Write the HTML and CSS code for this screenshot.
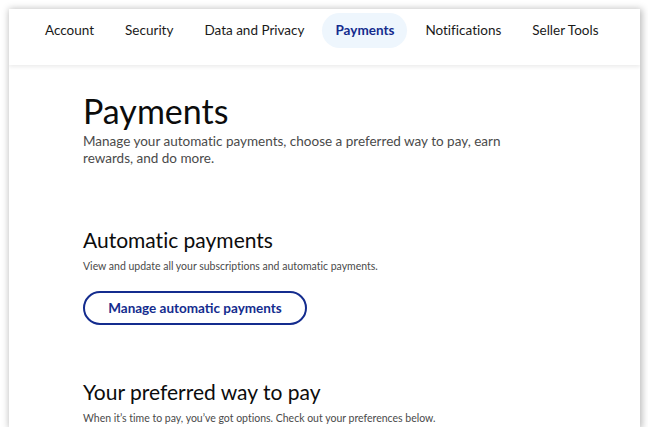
FILE: index.html
```html
<!DOCTYPE html>
<html lang="en">
<head>
<meta charset="utf-8">
<title>Payments</title>
<link rel="stylesheet" href="styles.css">
</head>
<body>
<div class="frame">
  <nav class="tabs">
    <a class="tab">Account</a>
    <a class="tab">Security</a>
    <a class="tab">Data and Privacy</a>
    <a class="tab active">Payments</a>
    <a class="tab">Notifications</a>
    <a class="tab">Seller Tools</a>
  </nav>
  <main class="content">
    <h1 class="title">Payments</h1>
    <p class="lead">Manage your automatic payments, choose a preferred way to pay, earn rewards, and do more.</p>

    <section class="section">
      <h2 class="section-title">Automatic payments</h2>
      <p class="section-text">View and update all your subscriptions and automatic payments.</p>
      <button class="btn-outline">Manage automatic payments</button>
    </section>

    <section class="section second">
      <h2 class="section-title">Your preferred way to pay</h2>
      <p class="section-text">When it’s time to pay, you’ve got options. Check out your preferences below.</p>
    </section>
  </main>
</div>
</body>
</html>
```

FILE: styles.css
```css
* { box-sizing: border-box; }
html, body { margin: 0; padding: 0; background: #ffffff; }
body {
  font-family: "Lato", "Open Sans", sans-serif;
  font-variant-ligatures: none;
  color: #001435;
}
.frame {
  margin: 9px 8px 0 9px;
  width: 631px;
  height: 418px;
  overflow: hidden;
  background: #ffffff;
  box-shadow: 1px 1px 7px 1px rgba(0,0,0,0.28);
}
.tabs {
  display: flex;
  align-items: center;
  gap: 5px;
  padding: 4px 0 17px 23px;
  height: 56px;
  box-shadow: 0 2px 4px rgba(0,0,0,0.08);
  position: relative;
}
.tab {
  display: block;
  padding: 0 13px;
  height: 35px;
  line-height: 35px;
  font-size: 13.5px;
  color: #1a1a1a;
  border-radius: 18px;
  white-space: nowrap;
}
.tab.active {
  background: #eef6fd;
  color: #142c8e;
  font-weight: 700;
}
.content {
  padding: 26px 0 0 74px;
}
.title {
  margin: 0;
  font-size: 34px;
  line-height: 40px;
  font-weight: 400;
  color: #0c0c0c;
}
.lead {
  margin: 2px 0 0;
  max-width: 440px;
  font-size: 13.5px;
  line-height: 17px;
  color: #4a4a4a;
}
.section { margin-top: 60px; }
.section.second { margin-top: 54px; }
.section-title {
  margin: 0;
  font-size: 21px;
  line-height: 26px;
  font-weight: 400;
  color: #0c0c0c;
}
.section-text {
  margin: 6px 0 0;
  font-size: 10.5px;
  line-height: 15px;
  color: #4a4a4a;
}
.btn-outline {
  margin-top: 17px;
  width: 224px;
  height: 34px;
  border: 2px solid #142c8e;
  border-radius: 17px;
  background: #ffffff;
  color: #142c8e;
  font-family: inherit;
  font-size: 13.5px;
  font-weight: 700;
  cursor: pointer;
}
```
